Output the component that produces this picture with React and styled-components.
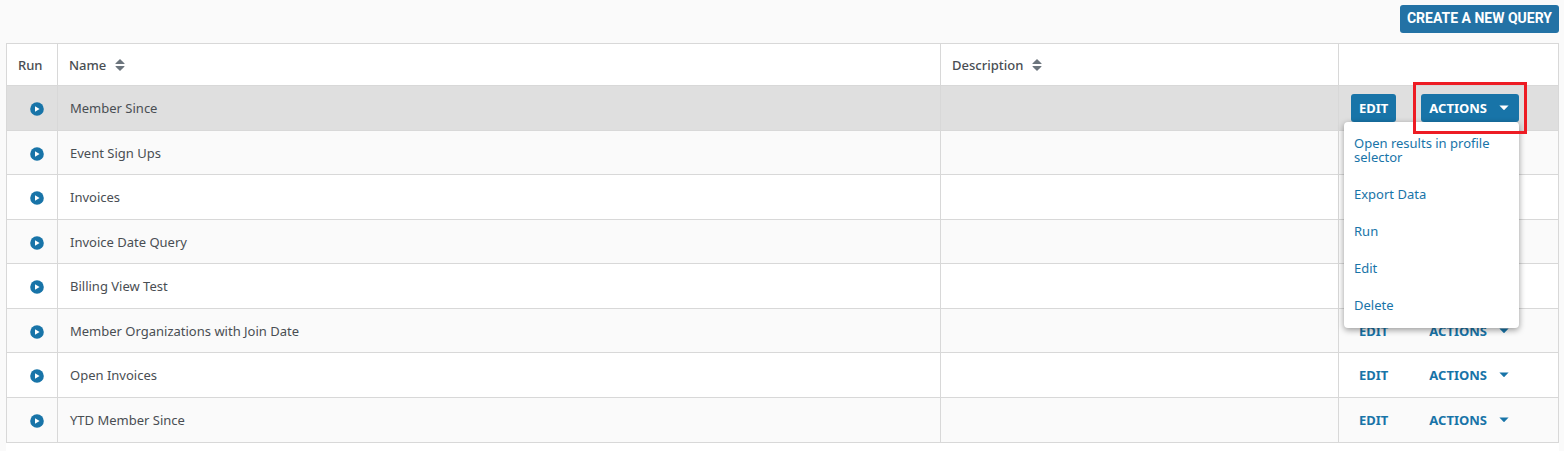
import { useState } from 'react';
import styled, { createGlobalStyle, css } from 'styled-components';

const blue = '#1874a8';
const line = '#d8d8d8';

const GlobalStyle = createGlobalStyle`
  * {
    box-sizing: border-box;
  }
  body {
    margin: 0;
    background: #fafafa;
    color: #494e53;
    font-family: "Segoe UI", "Noto Sans", sans-serif;
    font-size: 13px;
  }
`;

const Page = styled.main`
  padding: 5px 5px 0 6px;
`;

const Toolbar = styled.div`
  display: flex;
  justify-content: flex-end;
  padding-bottom: 10px;
`;

const CreateButton = styled.button`
  height: 28px;
  padding: 0 7px 2px;
  border: 0;
  border-radius: 3px;
  background: #2372a5;
  color: #fff;
  font: 700 14px Roboto, sans-serif;
  cursor: pointer;
`;

const Panel = styled.section`
  padding-bottom: 8px;
  background: #fff;
`;

const Table = styled.table`
  width: 100%;
  table-layout: fixed;
  border-collapse: collapse;
`;

const HeadCell = styled.th`
  height: 42px;
  padding: 0 11px;
  border: 1px solid ${line};
  font-weight: 500;
  text-align: left;
  width: ${props => props.$width || 'auto'};
`;

const Row = styled.tr`
  height: 45px;
  background: #fff;
  &:nth-child(even) {
    height: 44px;
    background: #fafafa;
  }
  &:last-child {
    height: 45px;
  }
  ${props => props.$active && css`background: #dfdfdf;`}
`;

const Cell = styled.td`
  padding: 0 12px;
  border: 1px solid ${line};
`;

const SortButton = styled.button`
  display: flex;
  align-items: center;
  gap: 9px;
  padding: 0;
  border: 0;
  background: none;
  color: inherit;
  font: inherit;
  cursor: pointer;
`;

const RunButton = styled.button`
  display: flex;
  margin-left: auto;
  padding: 2px 1px 0 0;
  border: 0;
  background: none;
  cursor: pointer;
`;

const RowActions = styled.div`
  display: flex;
  gap: 25px;
`;

const ActionButton = styled.button`
  display: flex;
  align-items: center;
  gap: 12px;
  height: 28px;
  padding: ${props => (props.$caret ? '0 10px 0 8px' : '0 8px')};
  border: 0;
  border-radius: 3px;
  background: ${props => (props.$filled ? blue : 'transparent')};
  color: ${props => (props.$filled ? '#fff' : blue)};
  font: inherit;
  font-weight: 700;
  cursor: pointer;
`;

const Dropdown = styled.div`
  position: relative;
  ${props => props.$marked && css`
    &::after {
      content: '';
      position: absolute;
      inset: -12px -8px;
      z-index: 3;
      border: 3px solid #ed1c24;
      pointer-events: none;
    }
  `}
`;

const Menu = styled.ul`
  position: absolute;
  top: 100%;
  right: 0;
  z-index: 2;
  width: 175px;
  margin: 0;
  padding: 3px 0 4px;
  border-radius: 4px;
  background: #fff;
  box-shadow: 0 2px 6px rgba(0, 0, 0, 0.4);
  list-style: none;
`;

const MenuLink = styled.a`
  display: block;
  padding: 11px 10px 12px;
  color: ${blue};
  line-height: 14px;
  text-decoration: none;
`;

const SortIcon = () => (
  <svg width='10' height='12' viewBox='0 0 10 12' fill='#6c757d' aria-hidden='true'>
    <path d='M5 0 L9.6 4.4 Q9.6 5 9 5 H1 Q.4 5 .4 4.4 Z' />
    <path d='M5 12 L9.6 7.6 Q9.6 7 9 7 H1 Q.4 7 .4 7.6 Z' />
  </svg>
);

const PlayIcon = () => (
  <svg width='14' height='14' viewBox='0 0 14 14' aria-hidden='true'>
    <circle cx='7' cy='7' r='6.8' fill={blue} />
    <path d='M5 4.2 L9.6 7 L5 9.8 Z' fill='#fff' />
  </svg>
);

const CaretIcon = () => (
  <svg width='10' height='6' viewBox='0 0 10 6' fill='currentColor' aria-hidden='true'>
    <path d='M.4 .5 H9.6 L5.5 4.8 Q5 5.2 4.5 4.8 Z' />
  </svg>
);

const queries = [
  'Member Since',
  'Event Sign Ups',
  'Invoices',
  'Invoice Date Query',
  'Billing View Test',
  'Member Organizations with Join Date',
  'Open Invoices',
  'YTD Member Since',
];

const menuItems = ['Open results in profile selector', 'Export Data', 'Run', 'Edit', 'Delete'];

function QueryRow({ name, open, onToggle }) {
  return (
    <Row $active={open}>
      <Cell>
        <RunButton aria-label={`Run ${name}`}><PlayIcon /></RunButton>
      </Cell>
      <Cell>{name}</Cell>
      <Cell />
      <Cell>
        <RowActions>
          <ActionButton $filled={open}>EDIT</ActionButton>
          <Dropdown $marked={open}>
            <ActionButton $caret $filled={open} aria-expanded={open} onClick={onToggle}>
              ACTIONS <CaretIcon />
            </ActionButton>
            {open && (
              <Menu>
                {menuItems.map(item => (
                  <li key={item}><MenuLink href='#'>{item}</MenuLink></li>
                ))}
              </Menu>
            )}
          </Dropdown>
        </RowActions>
      </Cell>
    </Row>
  );
}

export default function App() {
  const [openRow, setOpenRow] = useState('Member Since');

  return (
    <Page>
      <GlobalStyle />
      <Toolbar>
        <CreateButton>CREATE A NEW QUERY</CreateButton>
      </Toolbar>
      <Panel>
        <Table>
          <thead>
            <tr>
              <HeadCell $width='51px'>Run</HeadCell>
              <HeadCell><SortButton>Name <SortIcon /></SortButton></HeadCell>
              <HeadCell $width='398px'><SortButton>Description <SortIcon /></SortButton></HeadCell>
              <HeadCell $width='220px' aria-label='Row actions' />
            </tr>
          </thead>
          <tbody>
            {queries.map(name => (
              <QueryRow
                key={name}
                name={name}
                open={openRow === name}
                onToggle={() => setOpenRow(openRow === name ? null : name)}
              />
            ))}
          </tbody>
        </Table>
      </Panel>
    </Page>
  );
}
